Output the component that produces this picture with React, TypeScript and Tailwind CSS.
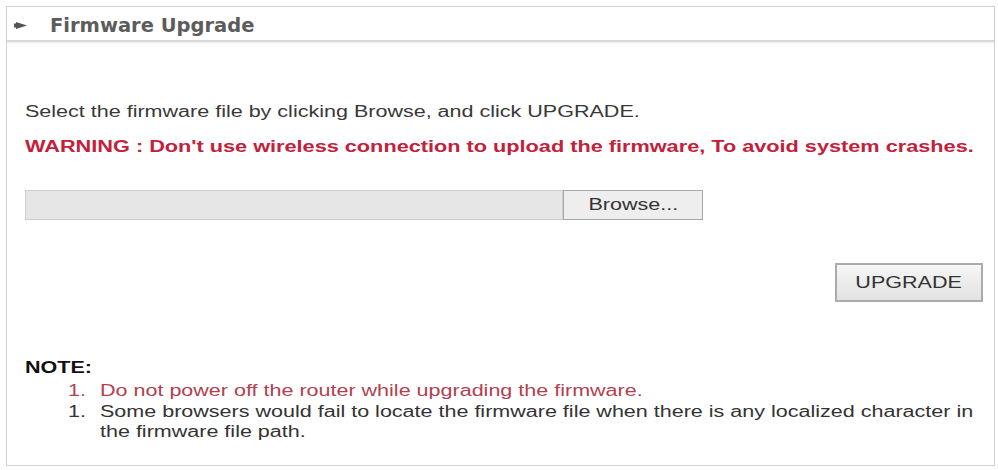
import React from 'react';

// Text in the reference is horizontally stretched, so each line is scaled on x
const wide = "w-max origin-left scale-x-[1.345] whitespace-nowrap";

function NoteItem({ color, lines }: { color: string; lines: string[] }) {
  return (
    <div className={`flex ${color}`}>
      <div className="w-[32px] pl-[43px] box-content">
        <div className={`${wide} leading-[20px]`}>1.</div>
      </div>
      <div>
        {lines.map((line) => (
          <div key={line} className={`${wide} leading-[20px]`}>
            {line}
          </div>
        ))}
      </div>
    </div>
  );
}

export default function App() {
  return (
    <div className="h-[470px] w-[998px] overflow-hidden bg-white pt-[6px] pl-[6px] font-['Liberation_Sans',Arial,sans-serif] text-[16px] text-[#383838]">
      <div className="w-[989px] h-[460px] border border-[#d2d2d2]">
        {/* Header */}
        <div className="h-[35px] flex items-center border-b-2 border-[#d8d8d8] shadow-[0_1px_2px_rgba(0,0,0,0.08)]">
          <svg width="13" height="7" viewBox="0 0 13 7" className="ml-[7px] mt-[3px]">
            <polygon points="0,1.5 2,1.5 2,0 13,3.5 2,7 2,5.5 0,5.5" fill="#555" />
          </svg>
          <span className="ml-[23px] mt-[4px] font-['DejaVu_Sans',Verdana,sans-serif] font-bold text-[19.5px] text-[#5c5c5c]">
            Firmware Upgrade
          </span>
        </div>

        {/* Body */}
        <div className="pl-[18px] pr-[11px]">
          <div className={`${wide} mt-[60px] leading-[20px]`}>
            Select the firmware file by clicking Browse, and click UPGRADE.
          </div>
          <div className="mt-[15px] w-max origin-left scale-x-[1.356] whitespace-nowrap leading-[20px] font-bold text-[#c4203a]">
            WARNING : Don't use wireless connection to upload the firmware, To avoid system crashes.
          </div>

          <div className="mt-[33px] flex h-[30px]">
            <div className="w-[538px] h-full bg-[#e6e6e6] border border-[#cdcdcd]" />
            <button className="w-[140px] h-full bg-[#eeeeee] border border-[#a8a8a8] flex items-center justify-center text-[#333]">
              <span className="scale-x-[1.345] whitespace-nowrap">Browse...</span>
            </button>
          </div>

          <div className="mt-[43px] flex justify-end">
            <button className="w-[148px] h-[39px] bg-gradient-to-b from-[#f6f6f6] to-[#e2e2e2] border-2 border-[#ababab] flex items-center justify-center text-[#333]">
              <span className="scale-x-[1.345] whitespace-nowrap">UPGRADE</span>
            </button>
          </div>

          <div className={`${wide} mt-[56px] leading-[20px] font-bold text-[#111]`}>NOTE:</div>
          <div className="mt-[3px]">
            <NoteItem color="text-[#b2404f]" lines={["Do not power off the router while upgrading the firmware."]} />
            <div className="mt-[1px]">
              <NoteItem
                color="text-[#333]"
                lines={[
                  "Some browsers would fail to locate the firmware file when there is any localized character in",
                  "the firmware file path.",
                ]}
              />
            </div>
          </div>
        </div>
      </div>
    </div>
  );
}
